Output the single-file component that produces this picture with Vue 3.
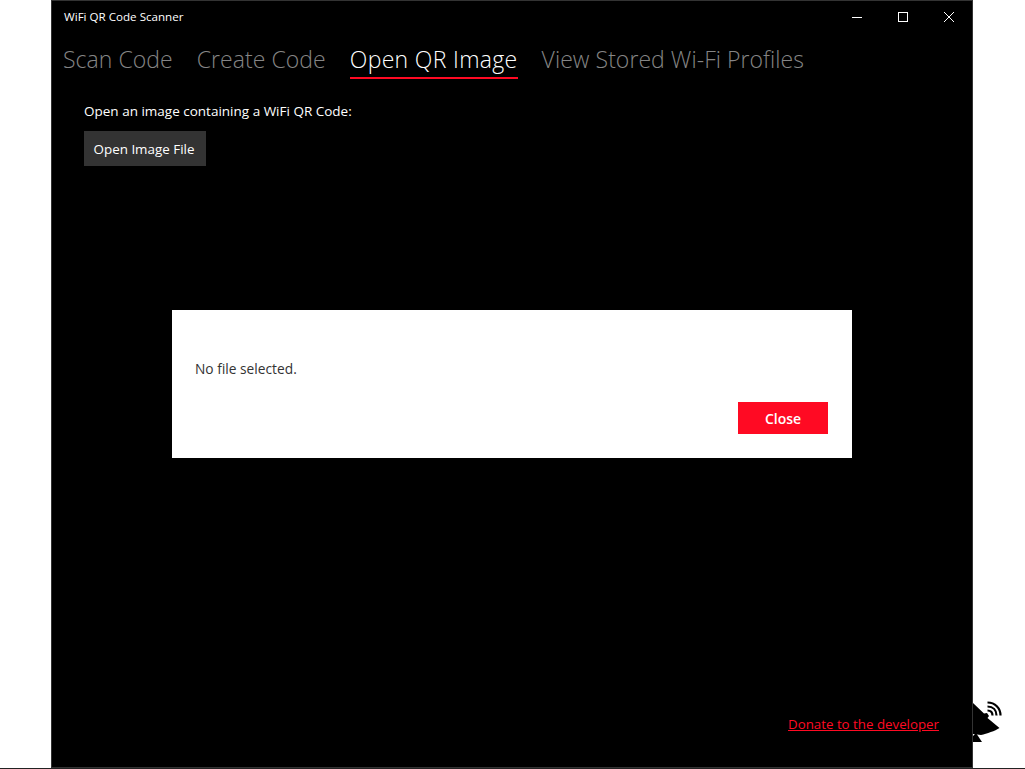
<script setup>
const tabs = [
  { label: 'Scan Code', active: false },
  { label: 'Create Code', active: false },
  { label: 'Open QR Image', active: true },
  { label: 'View Stored Wi-Fi Profiles', active: false },
]
</script>

<template>
  <div class="page">
    <div class="window">
      <header class="titlebar">
        <span class="title">WiFi QR Code Scanner</span>
        <div class="controls">
          <span class="ctrl">
            <svg width="10" height="10" viewBox="0 0 10 10"><path d="M0 5.5H10" stroke="#fff" fill="none" /></svg>
          </span>
          <span class="ctrl">
            <svg width="10" height="10" viewBox="0 0 10 10"><rect x="0.5" y="0.5" width="9" height="9" stroke="#fff" fill="none" /></svg>
          </span>
          <span class="ctrl">
            <svg width="10" height="10" viewBox="0 0 10 10"><path d="M0 0L10 10M10 0L0 10" stroke="#fff" fill="none" /></svg>
          </span>
        </div>
      </header>
      <nav class="tabs">
        <span v-for="t in tabs" :key="t.label" class="tab" :class="{ active: t.active }">{{ t.label }}</span>
      </nav>
      <main class="content">
        <p class="prompt">Open an image containing a WiFi QR Code:</p>
        <button class="open">Open Image File</button>
      </main>
      <footer class="footer">
        <a class="donate">Donate to the developer</a>
      </footer>
      <div class="dialog">
        <p class="msg">No file selected.</p>
        <div class="actions"><button class="close">Close</button></div>
      </div>
    </div>
    <svg class="dish" width="50" height="50" viewBox="0 0 50 50">
      <path d="M13 8L24 18.500L27 18L29 21L27.500 23L39.500 33C35 36 27 38.500 21 40L13 39Z" fill="#000" />
      <path d="M16 38L22 47H13V41Z" fill="#000" />
      <path d="M27.500 15.500C30.500 15.500 32.500 17.500 32.500 20.500M27.500 11.500C33 11.500 36.500 15 36.500 20.500M27.500 7.500C35 7.500 40.500 13 40.500 20.500" stroke="#000" stroke-width="2.200" fill="none" />
    </svg>
  </div>
</template>

<style>
html, body { margin: 0; background: #fff; }
</style>

<style scoped>
.page {
  position: relative;
  width: 1025px;
  height: 769px;
  box-sizing: border-box;
  padding-left: 51px;
  background: #fff;
  border-bottom: 1px solid #222;
  overflow: hidden;
  font-family: "Open Sans", "Noto Sans", sans-serif;
}
.window {
  position: relative;
  width: 922px;
  height: 768px;
  box-sizing: border-box;
  border: 1px solid #333;
  background: #000;
  color: #fff;
  display: flex;
  flex-direction: column;
}
.titlebar {
  height: 31px;
  display: flex;
  align-items: center;
  justify-content: space-between;
  padding-left: 12px;
}
.title { font-size: 11.6px; color: #fff; }
.controls { display: flex; }
.ctrl {
  width: 46px;
  height: 31px;
  display: flex;
  align-items: center;
  justify-content: center;
}
.ctrl svg { display: block; }
.tabs {
  display: flex;
  gap: 24px;
  padding: 10px 0 0 11px;
}
.tab {
  font-size: 23px;
  font-weight: 300;
  line-height: 34px;
  padding-bottom: 1px;
  color: #858585;
  letter-spacing: 0.05px;
  border-bottom: 2px solid transparent;
}
.tab.active {
  color: #fff;
  letter-spacing: 0.33px;
  border-bottom-color: #ff0a23;
}
.content {
  padding: 22px 0 0 32px;
}
.prompt {
  margin: 0 0 10px;
  font-size: 13.5px;
  line-height: 20px;
  color: #fff;
}
.open {
  display: block;
  width: 122px;
  height: 35px;
  padding: 0 2px 0 0;
  border: 0;
  background: #333;
  color: #fff;
  font: inherit;
  font-size: 13.4px;
}
.footer {
  margin-top: auto;
  display: flex;
  justify-content: flex-end;
  padding: 0 33px 33px 0;
}
.donate {
  font-size: 13.3px;
  line-height: 20px;
  color: #ff0a23;
  text-decoration: underline;
}
.dialog {
  position: absolute;
  left: 120px;
  top: 309px;
  width: 680px;
  height: 148px;
  box-sizing: border-box;
  padding: 49px 24px 24px 23px;
  background: #fff;
  display: flex;
  flex-direction: column;
  justify-content: space-between;
}
.msg {
  margin: 0;
  font-size: 13.75px;
  line-height: 20px;
  color: #333;
}
.actions { display: flex; justify-content: flex-end; }
.close {
  width: 90px;
  height: 32px;
  padding: 0;
  border: 0;
  background: #ff0a23;
  color: #fff;
  font: inherit;
  font-size: 14px;
  font-weight: 600;
}
.dish {
  position: absolute;
  left: 960px;
  top: 695px;
}
</style>
